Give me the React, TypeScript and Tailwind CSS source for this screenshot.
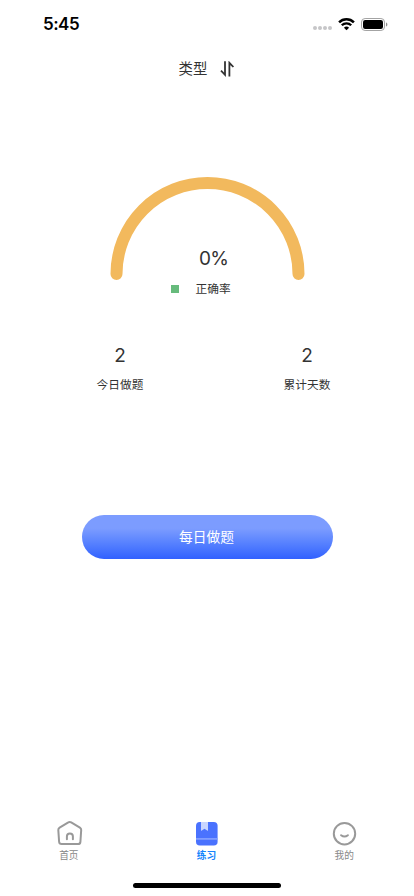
import React from 'react';

const StatusBar: React.FC = () => (
    <div className="h-12 flex items-center justify-between pl-[43px] pr-[26px] text-black">
        <span className="text-[17px] font-semibold leading-none tracking-[-0.5px]">5:45</span>
        <div className="flex items-center">
            <div className="flex gap-[1px] mt-[7px] mr-[6px]">
                {[0, 1, 2, 3].map(i => (
                    <span key={i} className="w-1 h-1 rounded-full bg-[#c6c6c8]" />
                ))}
            </div>
            <svg className="w-[17px] h-[13px] mr-[6px]" viewBox="0 0 17 13" fill="none" stroke="currentColor">
                <path d="M1.1 4.4a10.4 10.4 0 0 1 14.8 0" strokeWidth="2.5" />
                <path d="M3.8 7.3a6.6 6.6 0 0 1 9.4 0" strokeWidth="2.3" />
                <path d="M8.5 12.3 5.9 9.7a3.7 3.7 0 0 1 5.2 0z" fill="currentColor" stroke="none" />
            </svg>
            <svg className="w-[27px] h-[13px]" viewBox="0 0 27 13" fill="none">
                <rect x="0.5" y="0.5" width="23" height="12" rx="3.6" stroke="#a3a3a3" />
                <rect x="2" y="2" width="20" height="9" rx="2.2" fill="currentColor" />
                <path d="M25 4.5v4c.8-.3 1.4-1.1 1.4-2s-.6-1.7-1.4-2z" fill="#8e8e8e" />
            </svg>
        </div>
    </div>
);

const Stat: React.FC<{ value: number; label: string }> = ({ value, label }) => (
    <div className="w-[187px] flex flex-col items-center text-[#333]">
        <span className="text-[19px] leading-6">{value}</span>
        <span className="mt-[5px] text-[11.7px] leading-[24px]">{label}</span>
    </div>
);

const HomeIcon = () => (
    <svg className="w-7 h-7" viewBox="0 0 28 28" fill="none" stroke="#999" strokeWidth="2" strokeLinecap="round" strokeLinejoin="round">
        <path d="M13.3 2.4 4.6 7.6Q3.2 8.5 3.3 10L4.1 21.8Q4.3 24.1 6.6 24.1H22.9Q25.2 24.1 25.4 21.8L26.2 10Q26.3 8.5 24.9 7.6L16.2 2.4Q14.7 1.5 13.3 2.4Z" />
        <path d="M11.9 19.2v-2.6a3 3 0 0 1 6 0v2.6" />
    </svg>
);

const BookIcon = () => (
    <svg className="w-7 h-7" viewBox="0 0 28 28" fill="none">
        <rect x="3" y="2" width="21.6" height="23.6" rx="3.8" fill="#4a72fe" />
        <path d="M8 2h7v8.2q0 .9-.8.4L11.5 8.8 8.8 10.6q-.8.5-.8-.4z" fill="#c9d5ff" />
        <path d="M3 18.9h21.6" stroke="#88a2ff" strokeWidth="1.6" />
    </svg>
);

const SmileIcon = () => (
    <svg className="w-7 h-7" viewBox="0 0 28 28" fill="none" stroke="#999" strokeWidth="2" strokeLinecap="round">
        <circle cx="14.5" cy="13.7" r="10.7" />
        <path d="M11.1 15.2q3.4 2.7 6.8 0" />
    </svg>
);

const tabs = [
    { label: '首页', icon: <HomeIcon />, active: false },
    { label: '练习', icon: <BookIcon />, active: true },
    { label: '我的', icon: <SmileIcon />, active: false },
];

export default function App() {
    return (
        <div className="w-full h-screen bg-white flex flex-col overflow-hidden font-['Inter','Noto_Sans_CJK_SC',sans-serif]">
            <StatusBar />

            <header className="h-[42px] flex items-center justify-center gap-[13px] text-[#333]">
                <span className="text-[14.4px] leading-none">类型</span>
                <svg className="w-[15px] h-4" viewBox="0 0 15 16" fill="none" stroke="#333" strokeWidth="1.8">
                    <path d="M5 .2v13.6L1 9.7" />
                    <path d="M9.4 15.4V1.8L13.4 6" />
                </svg>
            </header>

            <main className="flex flex-col items-center">
                <div className="mt-[87px] w-[195px]">
                    <svg className="w-[195px] h-[104px] ml-[0.5px]" viewBox="0 0 195 104" fill="none">
                        <path d="M6.5 97a91 91 0 0 1 182 0" stroke="#f2b95d" strokeWidth="12" strokeLinecap="round" />
                    </svg>
                    <div className="-mt-[34px] pl-[13px] text-center text-[19px] leading-6 tracking-[-0.8px] text-[#333]">0%</div>
                    <div className="mt-[5px] flex items-center pl-[61px] text-[#333]">
                        <span className="w-2 h-2 bg-[#67bb7c]" />
                        <span className="ml-[17px] mt-px text-[11.7px] leading-6">正确率</span>
                    </div>
                </div>

                <div className="mt-[43px] w-[374px] flex ml-[13px]">
                    <Stat value={2} label="今日做题" />
                    <Stat value={2} label="累计天数" />
                </div>

                <button className="mt-[118px] w-[251px] h-11 rounded-full bg-linear-to-b from-[#7c9cff] from-30% to-[#3160ff] pr-px text-[13.7px] text-white">
                    每日做题
                </button>
            </main>

            <nav className="mt-auto flex mr-px">
                {tabs.map(tab => (
                    <div key={tab.label} className="flex-1 flex flex-col items-center">
                        {tab.icon}
                        <span className={`mt-[1px] text-[9.7px] leading-[14px] ${tab.active ? 'font-bold text-[#1684fc]' : 'text-[#888]'}`}>
                            {tab.label}
                        </span>
                    </div>
                ))}
            </nav>
            <div className="mt-5 mb-2 mx-auto w-[148px] h-[5px] rounded-full bg-black" />
        </div>
    );
}
